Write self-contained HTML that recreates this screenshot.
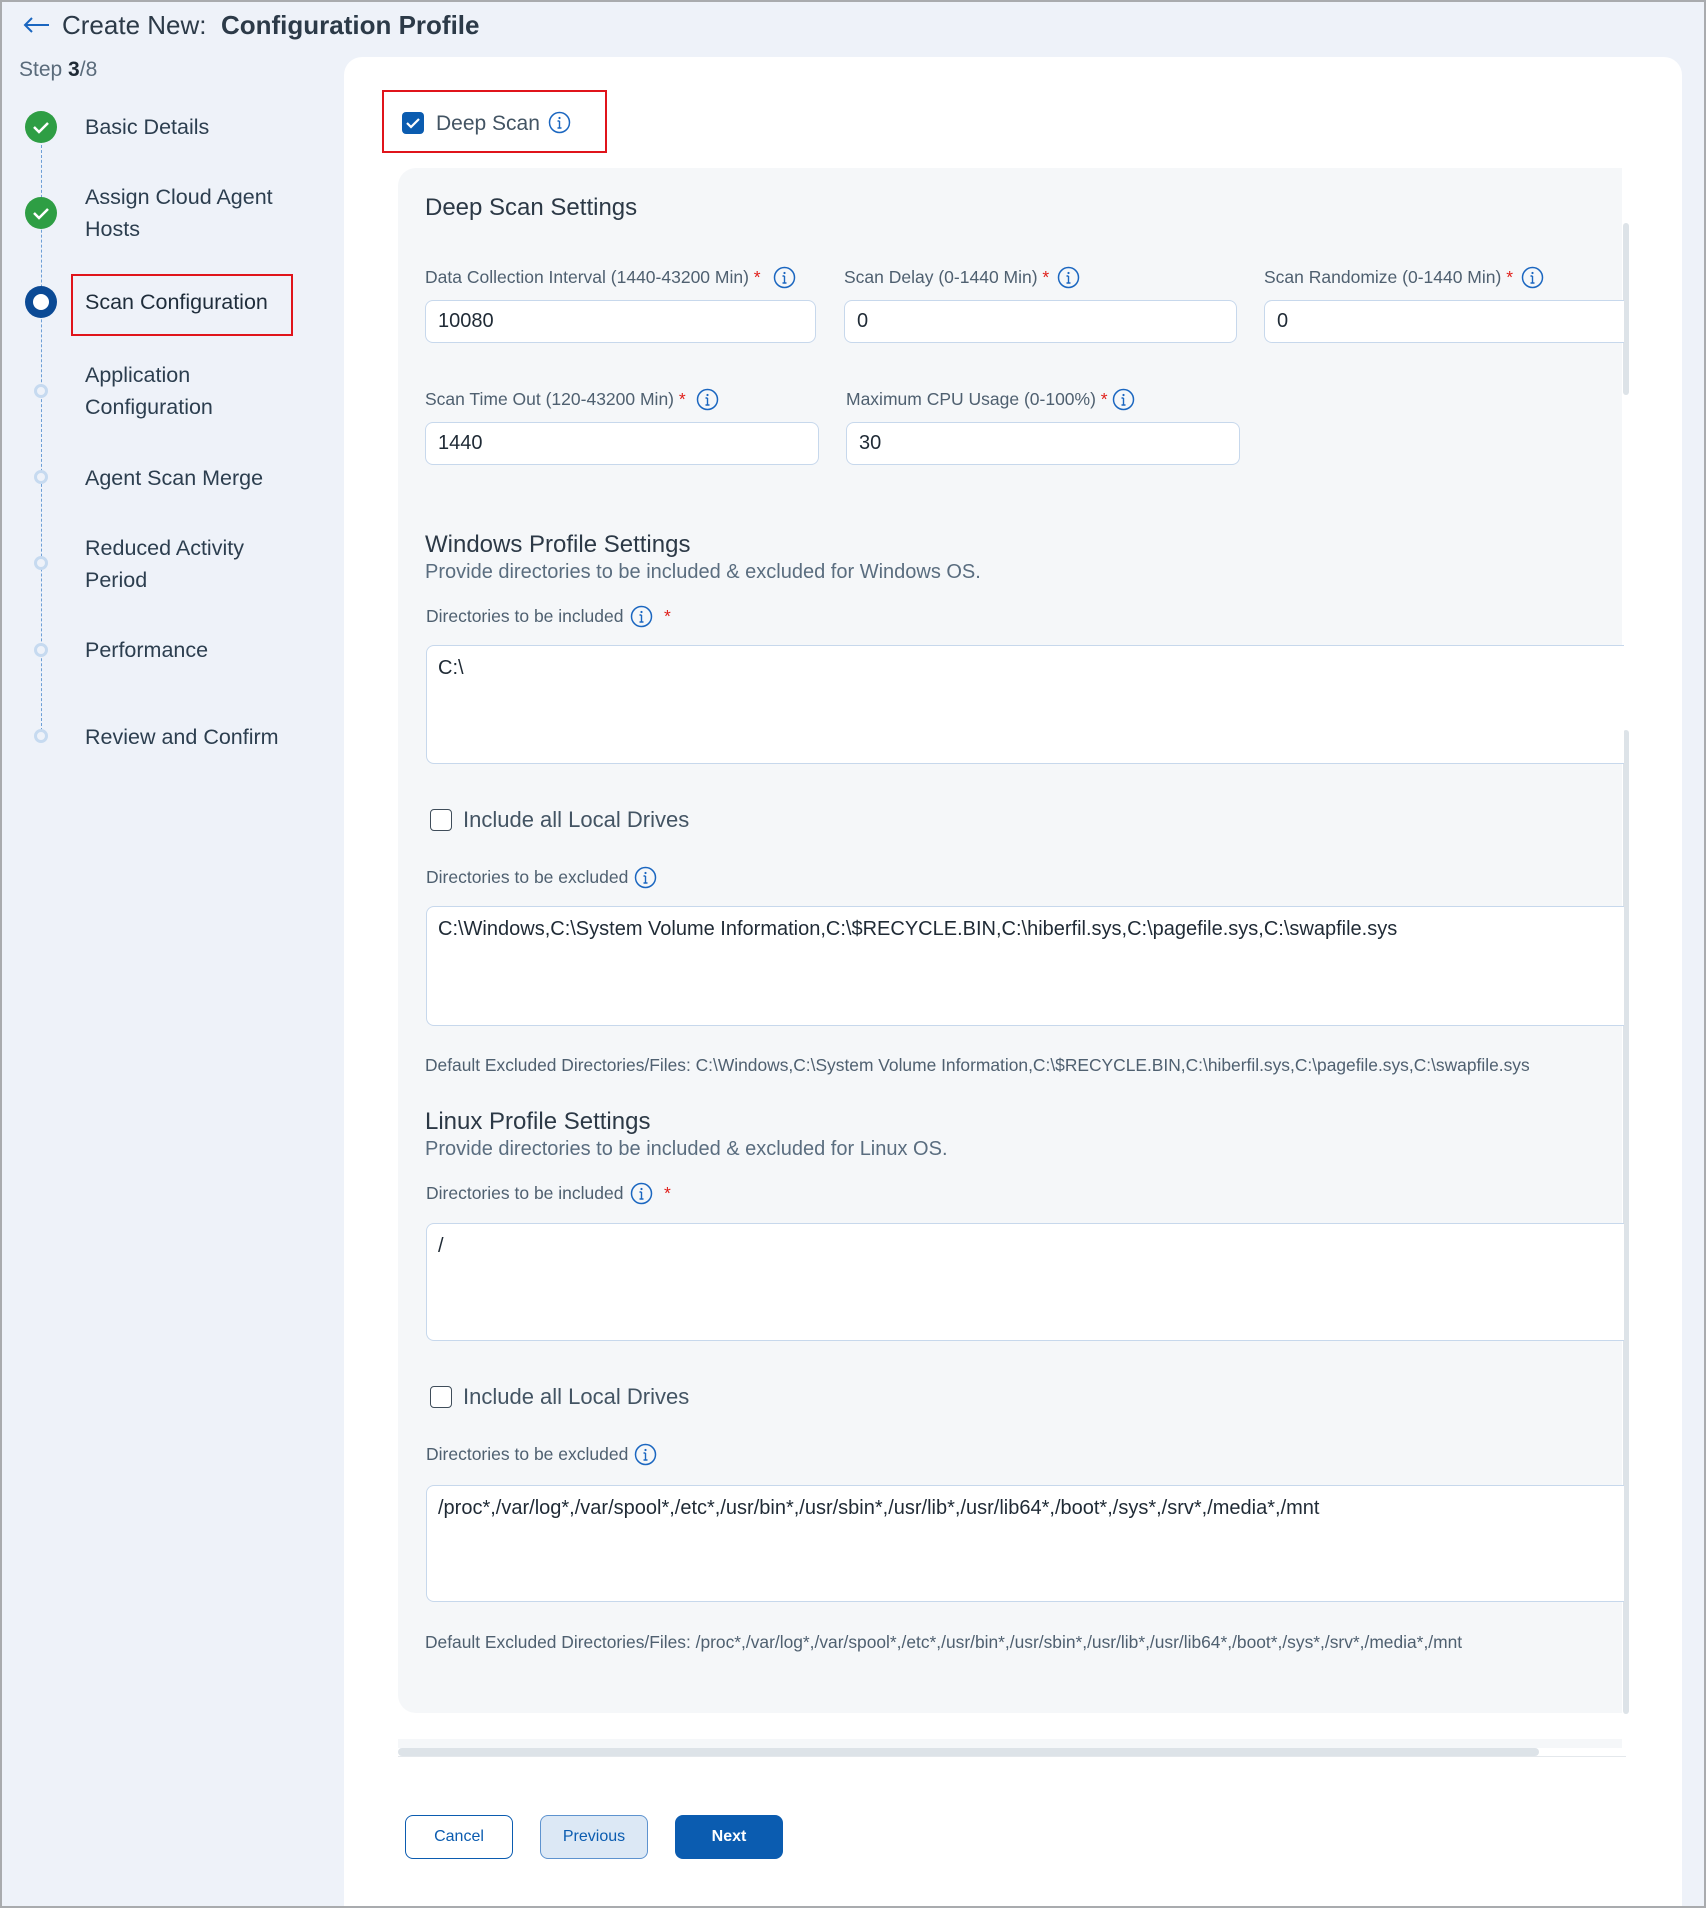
<!DOCTYPE html>
<html><head><meta charset="utf-8"><style>
*{box-sizing:border-box;margin:0;padding:0}
body{width:1706px;height:1908px;overflow:hidden;background:#eef2f9;font-family:"Liberation Sans",sans-serif;position:relative;}
.a{position:absolute;white-space:nowrap;line-height:1}
.lbl{font-size:17.5px;color:#4f6070}
.side{font-size:21.5px;color:#2c3e4f;line-height:32px}
.req{color:#e0201b}
.inp{position:absolute;background:#fff;border:1.5px solid #c7d8ec;border-radius:8px;font-size:20px;color:#1f2a35;padding-left:12px;display:flex;align-items:center}
.ta{position:absolute;background:#fff;border:1.5px solid #c7d8ec;border-radius:8px 0 0 8px;border-right:none;font-size:20px;color:#1f2a35;padding:10px 0 0 11px;white-space:nowrap;line-height:24px}
.h{font-size:24px;color:#2c3946}
.sub{font-size:20px;color:#5a6d7f}
.def{font-size:17.4px;color:#4f6070}
.cb{position:absolute;width:22px;height:22px;border:1.8px solid #3f4d5a;border-radius:4px;background:#fff}
.cbt{font-size:22px;color:#435463}
.dot{position:absolute;left:34px;width:14px;height:14px;border-radius:50%;border:3px solid #c6daf0;background:#eef2f9}
.btn{position:absolute;top:1815px;height:44px;border-radius:8px;font-size:16px;display:flex;align-items:center;justify-content:center}
</style></head><body>
<svg class="a" style="left:22px;top:15px" width="28" height="20" viewBox="0 0 28 20"><path d="M27 10H3M10 3L3 10l7 7" fill="none" stroke="#1a66c0" stroke-width="2"/></svg>
<div class="a" style="left:62px;top:12px;font-size:26px;color:#2c3a48">Create New:&nbsp; <b>Configuration Profile</b></div>
<div class="a" style="left:19px;top:59px;font-size:21px;color:#5a6b7b">Step <b style="color:#1f2a35">3</b>/8</div>

<div class="a" style="left:41px;top:140px;height:596px;border-left:1.5px dashed #6d9fd6"></div>
<svg class="a" style="left:24px;top:110px" width="34" height="34"><circle cx="17" cy="17" r="16" fill="#2e9e44"/><path d="M10 17l5 5 9-9" fill="none" stroke="#fff" stroke-width="2.5"/></svg>
<svg class="a" style="left:24px;top:196px" width="34" height="34"><circle cx="17" cy="17" r="16" fill="#2e9e44"/><path d="M10 17l5 5 9-9" fill="none" stroke="#fff" stroke-width="2.5"/></svg>
<svg class="a" style="left:24px;top:285px" width="34" height="34"><circle cx="17" cy="17" r="16" fill="#0b4a95"/><circle cx="17" cy="17" r="8" fill="#fff"/></svg>
<div class="dot" style="top:384px"></div><div class="dot" style="top:470px"></div><div class="dot" style="top:556px"></div><div class="dot" style="top:643px"></div><div class="dot" style="top:729px"></div>
<div class="a side" style="left:85px;top:111px">Basic Details</div>
<div class="a side" style="left:85px;top:181px">Assign Cloud Agent<br>Hosts</div>
<div class="a" style="left:71px;top:274px;width:222px;height:62px;border:2.5px solid #e0141b"></div>
<div class="a side" style="left:85px;top:286px;color:#1f2d3b">Scan Configuration</div>
<div class="a side" style="left:85px;top:359px">Application<br>Configuration</div>
<div class="a side" style="left:85px;top:462px">Agent Scan Merge</div>
<div class="a side" style="left:85px;top:532px">Reduced Activity<br>Period</div>
<div class="a side" style="left:85px;top:634px">Performance</div>
<div class="a side" style="left:85px;top:721px">Review and Confirm</div>

<div class="a" style="left:344px;top:57px;width:1338px;height:1849px;background:#fff;border-radius:18px 18px 0 0"></div>
<div class="a" style="left:382px;top:90px;width:225px;height:63px;border:2.5px solid #e0141b"></div>
<svg class="a" style="left:402px;top:112px" width="22" height="22"><rect x="0" y="0" width="22" height="22" rx="4" fill="#0b5cb0"/><path d="M5 11l4 4 8-8" fill="none" stroke="#fff" stroke-width="2.2"/></svg>
<div class="a" style="left:436px;top:113px;font-size:21px;color:#435463">Deep Scan</div>
<svg class="a" style="left:548px;top:111px" width="23" height="23"><circle cx="11.5" cy="11.5" r="10" fill="none" stroke="#1a66c0" stroke-width="1.5"/><path d="M11.5 10v7M9.5 17h4M9.5 10h2" stroke="#1a66c0" stroke-width="1.4" fill="none"/><circle cx="11.5" cy="7" r="1.1" fill="#1a66c0"/></svg>

<div class="a" style="left:398px;top:168px;width:1224px;height:1545px;background:#f5f7f9;border-radius:18px 0 0 18px"></div>
<div class="a" style="left:1623px;top:223px;width:6px;height:172px;background:#dde3e8;border-radius:3px"></div>
<div class="a" style="left:1623px;top:730px;width:6px;height:984px;background:#dde3e8;border-radius:3px"></div>
<div class="a" style="left:398px;top:1739px;width:1224px;height:9px;background:#f5f7f9"></div>
<div class="a" style="left:398px;top:1748px;width:1141px;height:8px;background:#dde3e8;border-radius:4px"></div>
<div class="a" style="left:398px;top:1756px;width:1228px;height:1px;background:#e4e8ec"></div>

<div class="a h" style="left:425px;top:196px">Deep Scan Settings</div>

<div class="a lbl" style="left:425px;top:269px">Data Collection Interval (1440-43200 Min) <span class="req">*</span></div>
<div class="a lbl" style="left:844px;top:269px">Scan Delay (0-1440 Min) <span class="req">*</span></div>
<div class="a lbl" style="left:1264px;top:269px">Scan Randomize (0-1440 Min) <span class="req">*</span></div>
<div class="a lbl" style="left:425px;top:391px">Scan Time Out (120-43200 Min) <span class="req">*</span></div>
<div class="a lbl" style="left:846px;top:391px">Maximum CPU Usage (0-100%) <span class="req">*</span></div>
<svg class="a ic" style="left:773px;top:266px" width="23" height="23"><circle cx="11.5" cy="11.5" r="10" fill="none" stroke="#1a66c0" stroke-width="1.5"/><path d="M11.5 10v7M9.5 17h4M9.5 10h2" stroke="#1a66c0" stroke-width="1.4" fill="none"/><circle cx="11.5" cy="7" r="1.1" fill="#1a66c0"/></svg>
<svg class="a" style="left:1057px;top:266px" width="23" height="23"><circle cx="11.5" cy="11.5" r="10" fill="none" stroke="#1a66c0" stroke-width="1.5"/><path d="M11.5 10v7M9.5 17h4M9.5 10h2" stroke="#1a66c0" stroke-width="1.4" fill="none"/><circle cx="11.5" cy="7" r="1.1" fill="#1a66c0"/></svg>
<svg class="a" style="left:1521px;top:266px" width="23" height="23"><circle cx="11.5" cy="11.5" r="10" fill="none" stroke="#1a66c0" stroke-width="1.5"/><path d="M11.5 10v7M9.5 17h4M9.5 10h2" stroke="#1a66c0" stroke-width="1.4" fill="none"/><circle cx="11.5" cy="7" r="1.1" fill="#1a66c0"/></svg>
<svg class="a" style="left:696px;top:388px" width="23" height="23"><circle cx="11.5" cy="11.5" r="10" fill="none" stroke="#1a66c0" stroke-width="1.5"/><path d="M11.5 10v7M9.5 17h4M9.5 10h2" stroke="#1a66c0" stroke-width="1.4" fill="none"/><circle cx="11.5" cy="7" r="1.1" fill="#1a66c0"/></svg>
<svg class="a" style="left:1112px;top:388px" width="23" height="23"><circle cx="11.5" cy="11.5" r="10" fill="none" stroke="#1a66c0" stroke-width="1.5"/><path d="M11.5 10v7M9.5 17h4M9.5 10h2" stroke="#1a66c0" stroke-width="1.4" fill="none"/><circle cx="11.5" cy="7" r="1.1" fill="#1a66c0"/></svg>

<div class="inp" style="left:425px;top:300px;width:391px;height:43px">10080</div>
<div class="inp" style="left:844px;top:300px;width:393px;height:43px">0</div>
<div class="inp" style="left:1264px;top:300px;width:360px;height:43px;border-right:none;border-radius:8px 0 0 8px">0</div>
<div class="inp" style="left:425px;top:422px;width:394px;height:43px">1440</div>
<div class="inp" style="left:846px;top:422px;width:394px;height:43px">30</div>

<div class="a h" style="left:425px;top:533px">Windows Profile Settings</div>
<div class="a sub" style="left:425px;top:562px">Provide directories to be included &amp; excluded for Windows OS.</div>
<div class="a lbl" style="left:426px;top:608px">Directories to be included</div>
<svg class="a" style="left:630px;top:605px" width="23" height="23"><circle cx="11.5" cy="11.5" r="10" fill="none" stroke="#1a66c0" stroke-width="1.5"/><path d="M11.5 10v7M9.5 17h4M9.5 10h2" stroke="#1a66c0" stroke-width="1.4" fill="none"/><circle cx="11.5" cy="7" r="1.1" fill="#1a66c0"/></svg>
<div class="a lbl req" style="left:664px;top:608px">*</div>
<div class="ta" style="left:426px;top:645px;width:1198px;height:119px">C:\</div>
<div class="cb" style="left:430px;top:809px"></div>
<div class="a cbt" style="left:463px;top:809px">Include all Local Drives</div>
<div class="a lbl" style="left:426px;top:869px">Directories to be excluded</div>
<svg class="a" style="left:634px;top:866px" width="23" height="23"><circle cx="11.5" cy="11.5" r="10" fill="none" stroke="#1a66c0" stroke-width="1.5"/><path d="M11.5 10v7M9.5 17h4M9.5 10h2" stroke="#1a66c0" stroke-width="1.4" fill="none"/><circle cx="11.5" cy="7" r="1.1" fill="#1a66c0"/></svg>
<div class="ta" style="left:426px;top:906px;width:1198px;height:120px">C:\Windows,C:\System Volume Information,C:\$RECYCLE.BIN,C:\hiberfil.sys,C:\pagefile.sys,C:\swapfile.sys</div>
<div class="a def" style="left:425px;top:1057px">Default Excluded Directories/Files: C:\Windows,C:\System Volume Information,C:\$RECYCLE.BIN,C:\hiberfil.sys,C:\pagefile.sys,C:\swapfile.sys</div>

<div class="a h" style="left:425px;top:1110px">Linux Profile Settings</div>
<div class="a sub" style="left:425px;top:1139px">Provide directories to be included &amp; excluded for Linux OS.</div>
<div class="a lbl" style="left:426px;top:1185px">Directories to be included</div>
<svg class="a" style="left:630px;top:1182px" width="23" height="23"><circle cx="11.5" cy="11.5" r="10" fill="none" stroke="#1a66c0" stroke-width="1.5"/><path d="M11.5 10v7M9.5 17h4M9.5 10h2" stroke="#1a66c0" stroke-width="1.4" fill="none"/><circle cx="11.5" cy="7" r="1.1" fill="#1a66c0"/></svg>
<div class="a lbl req" style="left:664px;top:1185px">*</div>
<div class="ta" style="left:426px;top:1223px;width:1198px;height:118px">/</div>
<div class="cb" style="left:430px;top:1386px"></div>
<div class="a cbt" style="left:463px;top:1386px">Include all Local Drives</div>
<div class="a lbl" style="left:426px;top:1446px">Directories to be excluded</div>
<svg class="a" style="left:634px;top:1443px" width="23" height="23"><circle cx="11.5" cy="11.5" r="10" fill="none" stroke="#1a66c0" stroke-width="1.5"/><path d="M11.5 10v7M9.5 17h4M9.5 10h2" stroke="#1a66c0" stroke-width="1.4" fill="none"/><circle cx="11.5" cy="7" r="1.1" fill="#1a66c0"/></svg>
<div class="ta" style="left:426px;top:1485px;width:1198px;height:117px">/proc*,/var/log*,/var/spool*,/etc*,/usr/bin*,/usr/sbin*,/usr/lib*,/usr/lib64*,/boot*,/sys*,/srv*,/media*,/mnt</div>
<div class="a def" style="left:425px;top:1634px">Default Excluded Directories/Files: /proc*,/var/log*,/var/spool*,/etc*,/usr/bin*,/usr/sbin*,/usr/lib*,/usr/lib64*,/boot*,/sys*,/srv*,/media*,/mnt</div>

<div class="btn" style="left:405px;width:108px;border:1.5px solid #0b5cb0;color:#0b5cb0;background:#fff">Cancel</div>
<div class="btn" style="left:540px;width:108px;border:1.5px solid #5e93cf;color:#0b5cb0;background:#dce8f5">Previous</div>
<div class="btn" style="left:675px;width:108px;background:#0b5cb0;color:#fff;font-weight:bold">Next</div>
<div class="a" style="left:0;top:0;width:1706px;height:1908px;border:2px solid #a9abae;pointer-events:none"></div>
</body></html>
